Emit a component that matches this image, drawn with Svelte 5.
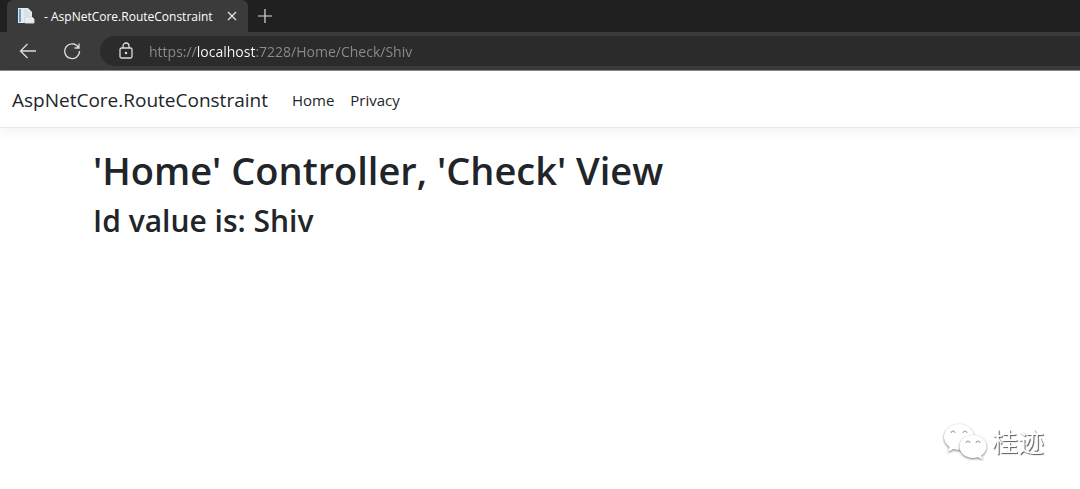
<script lang="ts">
  const project = "AspNetCore.RouteConstraint";
  const controller = "Home";
  const action = "Check";
  const id = "Shiv";
  let url = `https://localhost:7228/${controller}/${action}/${id}`;

  const links = ["Home", "Privacy"];
</script>

<div class="browser">
  <div class="tabs">
    <div class="tab">
      <svg class="favicon" width="18" height="18" viewBox="0 0 18 18">
        <path d="M1 1h10l4 4v11H1z" fill="#e4eaee" />
        <path d="M1 1h1v15H1z" fill="#d5e6f0" />
        <path d="M2 2h2v13H2z" fill="#5aa5d2" />
        <path d="M7 4h4M7 6h6M7 8h5" stroke="#d2dade" />
        <path d="M8 10h7l2 2v4H8z" fill="#f0f0f0" stroke="#d0d4d7" />
        <path d="M10 13h5" stroke="#dcdfe2" />
      </svg>
      <span class="title">- {project}</span>
      <button class="close" aria-label="Close tab">
        <svg width="10" height="10" viewBox="0 0 10 10">
          <path d="M1 1l8 8M9 1l-8 8" stroke="#e0e0e0" stroke-width="1.4" />
        </svg>
      </button>
    </div>
    <button class="add" aria-label="New tab">
      <svg width="14" height="14" viewBox="0 0 14 14">
        <path d="M7 0v14M0 7h14" stroke="#dcdcdc" stroke-width="1.2" />
      </svg>
    </button>
  </div>
  <div class="toolbar">
    <button class="tool" aria-label="Back">
      <svg width="18" height="18" viewBox="0 0 18 18">
        <path d="M17 9H1.500M8.500 2L1.500 9l7 7" />
      </svg>
    </button>
    <button class="tool" aria-label="Refresh">
      <svg width="18" height="18" viewBox="0 0 18 18">
        <path d="M15.500 5.500A7.400 7.400 0 1 0 16.500 9M16 1.500v4.500h-4.500" />
      </svg>
    </button>
    <div class="address">
      <svg width="14" height="18" viewBox="0 0 14 18">
        <rect x="1" y="6" width="12" height="10" rx="1.500" />
        <path d="M4 6V4a3 3 0 0 1 6 0v2" />
        <circle cx="7" cy="11" r="0.600" />
      </svg>
      <input aria-label="Address" spellcheck="false" bind:value={url} />
    </div>
  </div>
</div>

<header>
  <nav>
    <a class="brand" href="#home">{project}</a>
    {#each links as link}
      <a class="link" href="#{link.toLowerCase()}">{link}</a>
    {/each}
  </nav>
</header>

<main>
  <h1>'{controller}' Controller, '{action}' View</h1>
  <h2>Id value is: {id}</h2>
</main>

<div class="watermark">
  <svg width="46" height="40" viewBox="0 0 46 40">
    <path class="shade" d="M17 3C8.500 3 2 9 2 16c0 4 2 7.500 5.500 10L6 31l5.500-3c2 .6 4 1 6 1C26 29 32 23 32 16S25.500 3 17 3z" />
    <path class="shade" d="M31 14c-7.500 0-13.500 5-13.500 11.500S23.500 37 31 37c1.700 0 3.400-.3 5-.8l4.500 2.300-1.200-4C42.600 32.500 44.500 29 44.500 25.500 44.500 19 38.500 14 31 14z" />
    <path class="eyes" d="M9 12a2 2 0 0 1 4 0M21 12a2 2 0 0 1 4 0M24 22a2 2 0 0 1 4 0M34 22a2 2 0 0 1 4 0" />
  </svg>
  <span>桂迹</span>
</div>

<style>
  :global(body) {
    margin: 0;
    background-color: #fff;
    color: #212529;
    font-family: "Open Sans", "Noto Sans", sans-serif;
  }

  button {
    display: flex;
    align-items: center;
    justify-content: center;
    padding: 0;
    border: 0;
    background: none;
  }

  .browser {
    background-color: #3b3b3b;
    border-bottom: 1px solid #8a8a8a;
  }

  .tabs {
    display: flex;
    height: 32px;
    padding-left: 7px;
    background-color: #202020;
  }

  .tab {
    display: flex;
    align-items: center;
    box-sizing: border-box;
    width: 241px;
    padding: 0 8px 0 10px;
    border-radius: 6px 6px 0 0;
    background-color: #3b3b3b;
  }

  .title {
    flex: 1;
    margin-left: 9px;
    color: #fff;
    font-size: 12px;
    white-space: nowrap;
  }

  .close {
    width: 16px;
    height: 16px;
  }

  .add {
    width: 34px;
  }

  .toolbar {
    display: flex;
    align-items: center;
    height: 38px;
  }

  .tool {
    width: 44px;
    height: 30px;
    margin-left: 6px;
  }

  .tool + .tool {
    margin: 0 6px 0 0;
  }

  .tool svg,
  .address svg {
    fill: none;
    stroke: #dcdcdc;
    stroke-width: 1.3;
  }

  .address {
    display: flex;
    flex: 1;
    align-items: center;
    gap: 16px;
    height: 30px;
    padding-left: 19px;
    border-radius: 15px 0 0 15px;
    background-color: #2b2b2b;
  }

  /* host part of the url is brighter than the rest */
  input {
    flex: 1;
    height: 28px;
    padding: 0;
    border: 0;
    outline: none;
    background: linear-gradient(
      90deg,
      #8c8c8c 47px,
      #fff 47px,
      #fff 106px,
      #8c8c8c 106px
    );
    -webkit-background-clip: text;
    background-clip: text;
    color: transparent;
    font-family: inherit;
    font-size: 14px;
  }

  header {
    border-bottom: 1px solid #e8e9ea;
    box-shadow: 0 4px 12px rgba(0, 0, 0, 0.05);
  }

  nav {
    display: flex;
    align-items: center;
    box-sizing: border-box;
    height: 56px;
    padding: 2px 12px 0;
    gap: 16px;
  }

  a {
    color: #212529;
    text-decoration: none;
  }

  .brand {
    margin-right: 8px;
    font-size: 19px;
  }

  .link {
    font-size: 15px;
  }

  main {
    max-width: 894px;
    margin: 0 auto;
    padding-top: 18px;
  }

  h1,
  h2 {
    margin: 0 0 8px;
    font-weight: 600;
  }

  h1 {
    font-size: 38px;
    line-height: 48px;
  }

  h2 {
    font-size: 30px;
    line-height: 38px;
  }

  .watermark {
    position: fixed;
    right: 36px;
    bottom: 28px;
    display: flex;
    align-items: center;
    gap: 4px;
    color: #fff;
    font-family: "Noto Sans CJK SC", sans-serif;
    font-size: 26px;
    line-height: 40px;
    text-shadow: 1px 1px 1px #555;
  }

  .shade {
    fill: #fff;
    filter: drop-shadow(0 1px 1px #777);
  }

  .eyes {
    fill: none;
    stroke: #999;
  }
</style>
